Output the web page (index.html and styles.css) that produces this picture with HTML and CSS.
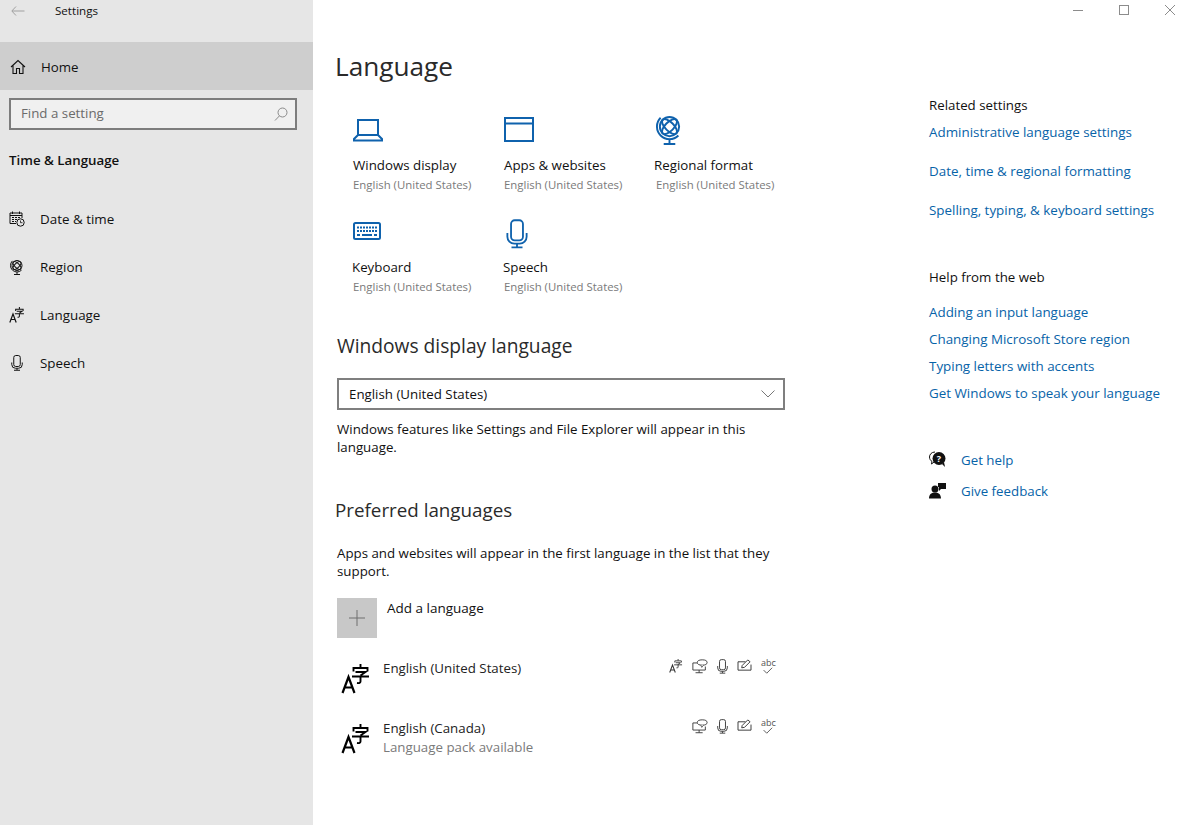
FILE: index.html
```html
<!DOCTYPE html>
<html lang="en">
<head>
<meta charset="utf-8">
<title>Settings</title>
<link rel="stylesheet" href="styles.css">
</head>
<body>
<svg class="defs" width="0" height="0" aria-hidden="true">
  <symbol id="globe" viewBox="0 0 28 32">
    <circle cx="14" cy="13" r="10" fill="none" stroke="currentColor" stroke-width="2"/>
    <ellipse cx="14" cy="13" rx="4.500" ry="10" fill="none" stroke="currentColor" stroke-width="2" transform="rotate(45 14 13)"/>
    <ellipse cx="14" cy="13" rx="4.500" ry="10" fill="none" stroke="currentColor" stroke-width="2" transform="rotate(-45 14 13)"/>
    <path d="M4.800 3.800 A13 13 0 0 0 23.200 22.200 M14 26 V31 M8 31 H20" fill="none" stroke="currentColor" stroke-width="2"/>
  </symbol>
  <symbol id="mic" viewBox="0 0 24 32">
    <rect x="5.500" y="1" width="13" height="22" rx="4" fill="none" stroke="currentColor" stroke-width="2"/>
    <path d="M1.500 15 V19 A7.500 7.500 0 0 0 9 26.500 H15 A7.500 7.500 0 0 0 22.500 19 V15 M12 27 V30 M6 30.500 H18" fill="none" stroke="currentColor" stroke-width="2"/>
  </symbol>
  <symbol id="lang" viewBox="0 0 30 30">
    <path d="M1.500 29 L7.500 13 L13.500 29 M3.500 23.500 H11.500" fill="none" stroke="currentColor" stroke-width="2.200"/>
    <path d="M19.500 0 V3.500 M12.500 7.500 V4 H26.500 V7.500 M14.500 8 H24.500 L19.500 11.500 M11 12.500 H28 M19.500 11.500 V17.500 Q19.500 19.500 16 19" fill="none" stroke="currentColor" stroke-width="1.900"/>
  </symbol>
  <symbol id="monitor" viewBox="0 0 18 16">
    <path d="M6 4 H1 V12 H15 V8 M8 12 V15 M4 15 H12" fill="none" stroke="currentColor"/>
    <ellipse cx="11.500" cy="3.500" rx="5.500" ry="3" fill="#fff" stroke="currentColor"/>
    <path d="M10 6.500 L11 9 L13 6.500" fill="#fff" stroke="currentColor" stroke-width=".8"/>
  </symbol>
  <symbol id="pen" viewBox="0 0 16 14">
    <path d="M9 3 H1 V12 H15 V6" fill="none" stroke="currentColor"/>
    <path d="M5 9.500 L5.500 7 L11.500 1 L14 3 L8 9 Z" fill="#fff" stroke="currentColor"/>
  </symbol>
  <symbol id="check" viewBox="0 0 14 9">
    <path d="M2 4 L6 8 L13 1" fill="none" stroke="currentColor" stroke-width="1.200"/>
  </symbol>
</svg>

<div class="window">
  <nav class="sidebar">
    <div class="titlebar">
      <svg class="back" width="14" height="10" viewBox="0 0 14 10"><path d="M5 .5 L.8 5 L5 9.500 M1 5 H13.500" fill="none" stroke="currentColor"/></svg>
      <span class="app-name">Settings</span>
    </div>
    <a class="home">
      <svg class="nav-icon" width="16" height="16" viewBox="0 0 16 16"><path d="M1 8 L8 1.500 L15 8 M3 6.500 V14.500 H6.500 V9.500 H9.500 V14.500 H13 V6.500" fill="none" stroke="currentColor" stroke-width="1.100"/></svg>
      <span>Home</span>
    </a>
    <div class="search">
      <span>Find a setting</span>
      <svg width="14" height="14" viewBox="0 0 14 14"><circle cx="8.500" cy="5.500" r="4.500" fill="none" stroke="currentColor"/><path d="M5.500 8.800 L1 13.500" stroke="currentColor"/></svg>
    </div>
    <h2 class="section">Time &amp; Language</h2>
    <ul class="nav-list">
      <li>
        <svg width="16" height="16" viewBox="0 0 16 16"><path d="M7 12.500 H1 V2 H13 V7 M1 4.500 H13 M3.500 .5 V3 M10.500 .5 V3" fill="none" stroke="currentColor"/><path d="M3 6.500 H5 M6 6.500 H8 M9 6.500 H11 M3 8.500 H5 M6 8.500 H8 M3 10.500 H5 M6 10.500 H7" stroke="currentColor"/><circle cx="11.500" cy="11.500" r="3.700" fill="none" stroke="currentColor"/><path d="M11.500 9.500 V11.700 H13.500" fill="none" stroke="currentColor" stroke-width=".8"/></svg>
        <span>Date &amp; time</span>
      </li>
      <li><svg width="16" height="16"><use href="#globe"/></svg><span>Region</span></li>
      <li><svg width="16" height="16"><use href="#lang"/></svg><span>Language</span></li>
      <li><svg width="16" height="16"><use href="#mic"/></svg><span>Speech</span></li>
    </ul>
  </nav>

  <div class="pane">
    <div class="window-controls">
      <svg width="12" height="12" viewBox="0 0 12 12"><path d="M1 6.500 H11" stroke="currentColor"/></svg>
      <svg width="12" height="12" viewBox="0 0 12 12"><rect x="1.500" y="1.500" width="9" height="9" fill="none" stroke="currentColor"/></svg>
      <svg width="12" height="12" viewBox="0 0 12 12"><path d="M1 1 L11 11 M11 1 L1 11" stroke="currentColor"/></svg>
    </div>
    <div class="columns">
      <main class="content">
        <h1>Language</h1>
        <div class="tiles">
          <div class="tile">
            <div class="tile-icon"><svg class="laptop" width="30" height="24" viewBox="0 0 30 24"><path d="M5 17 V2 H25 V17 M5 17 L1 21 V22.500 H29 V21 L25 17 Z" fill="none" stroke="currentColor" stroke-width="2"/></svg></div>
            <div class="tile-name">Windows display</div><div class="tile-sub">English (United States)</div>
          </div>
          <div class="tile">
            <div class="tile-icon"><svg width="30" height="25" viewBox="0 0 30 25"><path d="M1 1 H29 V24 H1 Z M1 6.500 H29" fill="none" stroke="currentColor" stroke-width="2"/></svg></div>
            <div class="tile-name">Apps &amp; websites</div><div class="tile-sub">English (United States)</div>
          </div>
          <div class="tile">
            <div class="tile-icon"><svg width="27" height="31" class="globe-big"><use href="#globe"/></svg></div>
            <div class="tile-name regional">Regional format</div><div class="tile-sub shift">English (United States)</div>
          </div>
          <div class="tile second">
            <div class="tile-icon"><svg width="28" height="18" viewBox="0 0 28 18"><rect x="1" y="1" width="26" height="16" rx="1.500" fill="none" stroke="currentColor" stroke-width="2"/><path d="M4 5.500 H24 M4 9 H24" stroke="currentColor" stroke-width="2" stroke-dasharray="2 1"/><path d="M4 13 H7 M9 13 H19 M21 13 H24" stroke="currentColor" stroke-width="2"/></svg></div>
            <div class="tile-name">Keyboard</div><div class="tile-sub">English (United States)</div>
          </div>
          <div class="tile second">
            <div class="tile-icon"><svg width="22" height="30" class="mic-big"><use href="#mic"/></svg></div>
            <div class="tile-name">Speech</div><div class="tile-sub">English (United States)</div>
          </div>
        </div>

        <h2 class="subhead">Windows display language</h2>
        <div class="select">
          <span>English (United States)</span>
          <svg width="14" height="8" viewBox="0 0 14 8"><path d="M.5 .5 L7 7 L13.500 .5" fill="none" stroke="currentColor"/></svg>
        </div>
        <p class="note">Windows features like Settings and File Explorer will appear in this<br>language.</p>

        <h2 class="subhead preferred">Preferred languages</h2>
        <p class="note apps">Apps and websites will appear in the first language in the list that they<br>support.</p>

        <div class="add">
          <div class="add-box"><svg width="16" height="16" viewBox="0 0 16 16"><path d="M8 0 V16 M0 8 H16" stroke="currentColor"/></svg></div>
          <span>Add a language</span>
        </div>

        <div class="lang-row">
          <svg class="lang-icon" width="30" height="30"><use href="#lang"/></svg>
          <div class="lang-text"><div>English (United States)</div></div>
          <div class="caps">
            <svg width="14" height="14"><use href="#lang"/></svg>
            <svg width="16" height="15"><use href="#monitor"/></svg>
            <svg width="11" height="15"><use href="#mic"/></svg>
            <svg width="15" height="13"><use href="#pen"/></svg>
            <span class="abc">abc<svg width="11" height="7"><use href="#check"/></svg></span>
          </div>
        </div>
        <div class="lang-row">
          <svg class="lang-icon" width="30" height="30"><use href="#lang"/></svg>
          <div class="lang-text"><div>English (Canada)</div><div class="lang-sub">Language pack available</div></div>
          <div class="caps">
            <svg width="16" height="15"><use href="#monitor"/></svg>
            <svg width="11" height="15"><use href="#mic"/></svg>
            <svg width="15" height="13"><use href="#pen"/></svg>
            <span class="abc">abc<svg width="11" height="7"><use href="#check"/></svg></span>
          </div>
        </div>
      </main>

      <aside class="related">
        <div class="rel-title">Related settings</div>
        <a class="rel-link spaced">Administrative language settings</a>
        <a class="rel-link spaced">Date, time &amp; regional formatting</a>
        <a class="rel-link spaced">Spelling, typing, &amp; keyboard settings</a>
        <div class="rel-title help">Help from the web</div>
        <a class="rel-link tight">Adding an input language</a>
        <a class="rel-link tight">Changing Microsoft Store region</a>
        <a class="rel-link tight">Typing letters with accents</a>
        <a class="rel-link tight">Get Windows to speak your language</a>
        <div class="support">
          <div class="support-row">
            <svg width="18" height="17" viewBox="0 0 18 17"><path d="M6 1 C2.500 1 .5 3.500 .5 6 C.5 8 1.500 9.500 3 10.500 L2.500 13 L5 11" fill="none" stroke="currentColor"/><circle cx="10" cy="7.500" r="6.500" fill="currentColor"/><path d="M13 13 L16 16 L15 11 Z" fill="currentColor"/><text x="10" y="11" class="q">?</text></svg>
            <a>Get help</a>
          </div>
          <div class="support-row">
            <svg width="18" height="17" viewBox="0 0 18 17"><circle cx="6" cy="7" r="3.500" fill="currentColor"/><path d="M0 16.500 C0 12 3 10.500 6 10.500 C9 10.500 12 12 12 16.500 Z M9 1 H17 V7 H12 L10 9 V5 H9 Z" fill="currentColor"/></svg>
            <a>Give feedback</a>
          </div>
        </div>
      </aside>
    </div>
  </div>
</div>
</body>
</html>
```

FILE: styles.css
```css
* { box-sizing: border-box; }
html, body { margin: 0; height: 100%; }
body {
  font-family: "Open Sans", "Noto Sans", sans-serif;
  font-size: 13.300px;
  color: #111;
  background: #fff;
  overflow: hidden;
}
.defs { position: absolute; }
h1, h2, p, ul { margin: 0; padding: 0; font-weight: normal; }
ul { list-style: none; }

.window { display: flex; height: 825px; }

.sidebar { width: 313px; flex: none; background: #e6e6e6; }
.titlebar { height: 42px; display: flex; align-items: flex-start; padding: 4px 0 0 10px; }
.back { color: #a0a0a0; margin: 2px 0 0 1px; }
.app-name { font-size: 11.600px; line-height: 14px; margin-left: 30px; }
.home { height: 48px; background: #cecece; display: flex; align-items: center; padding: 2px 0 0 10px; gap: 15px; }
.search { margin: 8px 16px 0 9px; height: 32px; border: 2px solid #7d7d7d; background: #f0f0f0; display: flex; align-items: center; justify-content: space-between; padding: 0 7px 2px 10px; color: #6b6b6b; }
.search svg { color: #8a8a8a; margin-top: 2px; }
.section { font-size: 13.300px; font-weight: 600; line-height: 18px; margin: 21px 0 0 9px; }
.nav-list { margin-top: 26px; }
.nav-list li { height: 48px; display: flex; align-items: center; padding-left: 9px; gap: 15px; font-size: 13.400px; }
.nav-list svg { flex: none; }

.pane { flex: 1; min-width: 0; display: flex; flex-direction: column; }
.window-controls { height: 42px; flex: none; display: flex; justify-content: flex-end; align-items: flex-start; gap: 34px; padding: 4px 9px 0 0; color: #8c8c8c; }
.columns { display: flex; flex: 1; }
.content { width: 472px; margin-left: 24px; flex: none; }
h1 { font-size: 26.200px; line-height: 34px; margin: 7px 0 0 -2px; color: #2a2a2a; }

.tiles { display: grid; grid-template-columns: repeat(3, 151px); margin: 34px 0 0 16px; }
.tile { height: 101px; }
.tile.second { height: 97px; }
.tile-icon { height: 32px; color: #0f62ad; display: flex; align-items: flex-start; }
.tile-icon svg { display: block; flex: none; }
.laptop { margin-top: 1px; }
.tile.second .tile-icon { padding-top: 4px; }
.globe-big { margin: -3px 0 0 1px; }
.tile.second .mic-big { margin: -3px 0 0 2px; }
.tile-name { font-size: 13.300px; line-height: 18px; margin-top: 7px; }
.tile.second .tile-name { margin: 8px 0 0 -1px; }
.tile.second .tile-sub { margin-top: 3px; }
.regional { margin-left: -1px; }
.tile-sub { font-size: 11.400px; line-height: 16px; margin-top: 3px; color: #7a7a7a; }
.tile-sub.shift { margin-left: 1px; }

.subhead { font-size: 19.200px; line-height: 26px; margin-top: 18px; color: #2a2a2a; }
.select { width: 448px; height: 32px; margin-top: 19px; border: 2px solid #7f7f7f; display: flex; align-items: center; justify-content: space-between; padding: 0 8px 0 10px; }
.select svg { color: #777; }
.note { line-height: 18px; margin-top: 10px; }
.preferred { font-size: 18.800px; margin: 41px 0 0 -2px; }
.apps { margin-top: 21px; }

.add { display: flex; align-items: flex-start; margin-top: 18px; gap: 10px; font-size: 13.500px; }
.add-box { width: 40px; height: 40px; background: #c8c8c8; display: flex; align-items: center; justify-content: center; color: #6e6e6e; }
.add > span { line-height: 18px; margin-top: 1px; }

.lang-row { display: flex; align-items: flex-start; height: 60px; width: 437px; padding-left: 4px; color: #000; }
.add + .lang-row { margin-top: 21px; }
.lang-icon { flex: none; margin-top: 5px; }
.lang-text { margin-left: 12px; line-height: 19px; flex: 1; color: #222; }
.lang-sub { color: #7a7a7a; }
.caps { display: flex; align-items: flex-start; gap: 9px; color: #333; margin-top: 0; }
.caps svg { display: block; }
.abc { font-size: 9px; line-height: 8px; color: #555; display: block; width: 13px; }
.abc svg { margin-left: 1px; }

.related { margin-left: 120px; width: 250px; padding-top: 54px; }
.rel-title { line-height: 18px; }
.rel-link { display: block; color: #0763a8; line-height: 18px; font-size: 13.400px; }
.spaced { margin-top: 9px; margin-bottom: 21px; }
.spaced + .spaced { margin-top: 0; }
.help { margin-top: 49px; margin-bottom: 17px; }
.tight { margin-bottom: 9px; }
.support { margin-top: 42px; }
.support-row { display: flex; align-items: center; gap: 14px; height: 31px; }
.support-row a { color: #0763a8; }
.q { font-size: 9px; font-weight: 700; fill: #fff; text-anchor: middle; }
```
